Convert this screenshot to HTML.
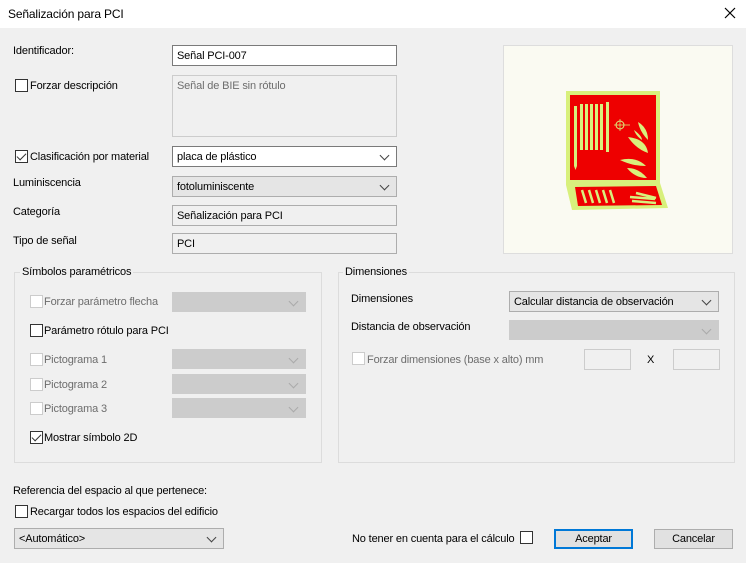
<!DOCTYPE html>
<html><head><meta charset="utf-8"><style>
*{box-sizing:border-box}
body{margin:0;width:746px;height:563px;background:#f0f0f0;font-family:"Liberation Sans",sans-serif;font-size:11px;letter-spacing:-0.15px;color:#000;position:relative;overflow:hidden}
.a{position:absolute;white-space:nowrap}
.tb{position:absolute;left:0;top:0;width:746px;height:28px;background:#fff}
.cb{position:absolute;width:13px;height:13px;border:1px solid #333;background:#fff}
.cb.d{border-color:#ccc}
.in{position:absolute;border:1px solid #7a7a7a;background:#fff;padding:4px 4px 0;height:21px}
.ro{position:absolute;border:1px solid #adadad;background:#f0f0f0;padding:4px 4px 0;height:21px}
.co{position:absolute;border:1px solid #adadad;background:#e5e5e5;padding:4px 4px 0;height:21px}
.co.w{background:#fff;border-color:#7a7a7a}
.co.g{background:#ccc;border-color:#ccc}
.co::after{content:"";position:absolute;right:8px;top:5px;width:6px;height:6px;border-right:1px solid #444;border-bottom:1px solid #444;transform:rotate(45deg)}
.co.g::after{border-color:#aaa}
.gr{color:#6d6d6d}
.grp{position:absolute;border:1px solid #dcdcdc}
.gt{position:absolute;background:#f0f0f0;padding:0 2px}
.btn{position:absolute;height:20px;border:1px solid #adadad;background:#e1e1e1;text-align:center;line-height:18px}
.chk::after{content:"";position:absolute;left:3px;top:0px;width:4px;height:8px;border-right:1.5px solid #333;border-bottom:1.5px solid #333;transform:rotate(45deg)}
</style></head><body>
<div class="tb"></div>
<div class="a" style="left:8px;top:7px;font-size:12px">Señalización para PCI</div>
<svg class="a" style="left:724px;top:7px" width="12" height="12"><path d="M1 1L11 11M11 1L1 11" stroke="#000" stroke-width="1.2"/></svg>

<div class="a" style="left:13px;top:45px">Identificador:</div>
<div class="in" style="left:172px;top:45px;width:225px">Señal PCI-007</div>

<div class="cb" style="left:15px;top:79px"></div>
<div class="a" style="left:30px;top:80px">Forzar descripción</div>
<div class="ro" style="left:172px;top:75px;width:225px;height:62px;border-color:#ccc"><span class="gr">Señal de BIE sin rótulo</span></div>

<div class="cb chk" style="left:15px;top:150px"></div>
<div class="a" style="left:30px;top:151px">Clasificación por material</div>
<div class="co w" style="left:172px;top:146px;width:225px">placa de plástico</div>

<div class="a" style="left:13px;top:177px">Luminiscencia</div>
<div class="co" style="left:172px;top:176px;width:225px">fotoluminiscente</div>

<div class="a" style="left:13px;top:206px">Categoría</div>
<div class="ro" style="left:172px;top:205px;width:225px">Señalización para PCI</div>
<div class="a" style="left:13px;top:235px">Tipo de señal</div>
<div class="ro" style="left:172px;top:233px;width:225px">PCI</div>

<div class="a" style="left:503px;top:45px;width:230px;height:209px;background:#fafaf2;border:1px solid #ddd"></div>
<svg class="a" style="left:560px;top:85px" width="115" height="130">
<rect x="6" y="6" width="94" height="94" fill="#d8f07c"/>
<rect x="10" y="10" width="86" height="85" fill="#ee0000"/>
<g fill="#d8f07c"><rect x="14" y="21" width="3" height="60"/><path d="M14 81h3l-1.5 4z"/><rect x="20" y="19" width="3" height="46"/><rect x="25" y="19" width="3" height="46"/><rect x="30" y="19" width="3" height="46"/><rect x="35" y="19" width="3" height="46"/><rect x="40" y="19" width="3" height="46"/><rect x="46" y="17" width="3" height="50"/>
<path d="M78 37q10 6 10 18q-8-8-10-18zM68 52q18 2 20 16q-12-4-20-16zM60 75q16-4 26 6q-14 0-26-6zM67 83q12 0 20 10q-12 0-20-10zM74 45q8 6 8 10q-6-4-8-10z"/>
<path d="M6 100L100 98L108 123L12 125Z"/></g>
<path d="M15 102L96 101L102 120L18 121Z" fill="#ee0000"/>
<g stroke="#d8f07c" stroke-width="2.5"><path d="M22 105l4 13M29 105l4 13M36 105l4 13M43 105l4 13M50 105l4 13M70 112l25 2M72 116l24 2M76 108l20 5"/></g>
<circle cx="60" cy="40" r="4" fill="none" stroke="#d8f07c"/><path d="M54 40h16M60 34v12" stroke="#d8f07c" stroke-width="0.7"/>
</svg>

<div class="grp" style="left:14px;top:272px;width:308px;height:191px"></div>
<div class="gt a" style="left:20px;top:266px">Símbolos paramétricos</div>
<div class="cb d" style="left:30px;top:295px"></div><div class="a gr" style="left:44px;top:296px">Forzar parámetro flecha</div>
<div class="co g" style="left:172px;top:292px;width:134px;height:20px"></div>
<div class="cb" style="left:30px;top:324px"></div><div class="a" style="left:44px;top:325px">Parámetro rótulo para PCI</div>
<div class="cb d" style="left:30px;top:353px"></div><div class="a gr" style="left:44px;top:354px">Pictograma 1</div>
<div class="co g" style="left:172px;top:349px;width:134px;height:20px"></div>
<div class="cb d" style="left:30px;top:378px"></div><div class="a gr" style="left:44px;top:379px">Pictograma 2</div>
<div class="co g" style="left:172px;top:374px;width:134px;height:20px"></div>
<div class="cb d" style="left:30px;top:402px"></div><div class="a gr" style="left:44px;top:403px">Pictograma 3</div>
<div class="co g" style="left:172px;top:398px;width:134px;height:20px"></div>
<div class="cb chk" style="left:30px;top:431px"></div><div class="a" style="left:44px;top:432px">Mostrar símbolo 2D</div>

<div class="grp" style="left:338px;top:272px;width:397px;height:191px"></div>
<div class="gt a" style="left:343px;top:266px">Dimensiones</div>
<div class="a" style="left:351px;top:293px">Dimensiones</div>
<div class="co" style="left:509px;top:291px;width:210px">Calcular distancia de observación</div>
<div class="a" style="left:351px;top:321px">Distancia de observación</div>
<div class="co g" style="left:509px;top:320px;width:210px;height:20px"></div>
<div class="cb d" style="left:352px;top:352px"></div><div class="a gr" style="left:367px;top:354px">Forzar dimensiones (base x alto) mm</div>
<div class="a" style="left:584px;top:349px;width:47px;height:21px;border:1px solid #ccc"></div>
<div class="a" style="left:647px;top:354px">X</div>
<div class="a" style="left:673px;top:349px;width:47px;height:21px;border:1px solid #ccc"></div>

<div class="a" style="left:13px;top:485px">Referencia del espacio al que pertenece:</div>
<div class="cb" style="left:15px;top:505px"></div><div class="a" style="left:30px;top:506px">Recargar todos los espacios del edificio</div>
<div class="co" style="left:14px;top:528px;width:210px">&lt;Automático&gt;</div>

<div class="a" style="left:352px;top:533px">No tener en cuenta para el cálculo</div>
<div class="cb" style="left:520px;top:531px"></div>
<div class="btn" style="left:554px;top:529px;width:79px;border:2px solid #0078d7;line-height:16px">Aceptar</div>
<div class="btn" style="left:654px;top:529px;width:79px">Cancelar</div>
</body></html>
